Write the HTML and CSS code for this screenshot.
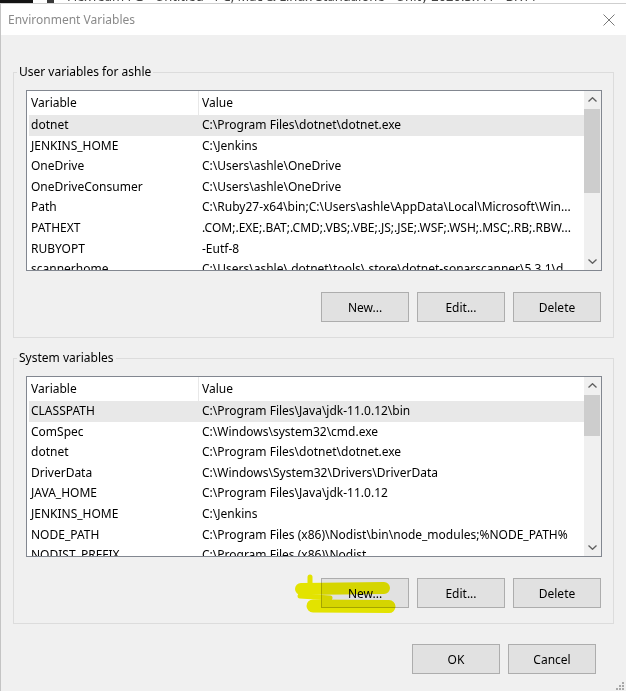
FILE: index.html
```html
<!DOCTYPE html>
<html>
<head>
<meta charset="utf-8">
<title>Environment Variables</title>
<link rel="stylesheet" href="styles.css">
</head>
<body>
<div class="behind">
  <div class="behind-black"></div>
  <div class="behind-icon"></div>
  <span class="behind-text">FlexTeam FG - Untitled - PC, Mac &amp; Linux Standalone - Unity 2020.3.7f1 &lt;DX11&gt;</span>
</div>
<div class="dialog">
  <div class="titlebar">
    <span class="title">Environment Variables</span>
    <svg class="close" width="12" height="12" viewBox="0 0 12 12"><path d="M0.5 0.5 L11.5 11.5 M11.5 0.5 L0.5 11.5" stroke="#7a7a7a" stroke-width="1" fill="none"/></svg>
  </div>
  <div class="content">
    <fieldset class="group">
      <legend>User variables for ashle</legend>
      <div class="group-inner">
        <div class="list">
          <div class="list-main">
            <div class="hdr"><div class="c1">Variable</div><div class="c2">Value</div></div>
            <div class="row sel"><div class="c1">dotnet</div><div class="c2">C:\Program Files\dotnet\dotnet.exe</div></div>
            <div class="row"><div class="c1">JENKINS_HOME</div><div class="c2">C:\Jenkins</div></div>
            <div class="row"><div class="c1">OneDrive</div><div class="c2">C:\Users\ashle\OneDrive</div></div>
            <div class="row"><div class="c1">OneDriveConsumer</div><div class="c2">C:\Users\ashle\OneDrive</div></div>
            <div class="row"><div class="c1">Path</div><div class="c2">C:\Ruby27-x64\bin;C:\Users\ashle\AppData\Local\Microsoft\Win...</div></div>
            <div class="row"><div class="c1">PATHEXT</div><div class="c2">.COM;.EXE;.BAT;.CMD;.VBS;.VBE;.JS;.JSE;.WSF;.WSH;.MSC;.RB;.RBW...</div></div>
            <div class="row"><div class="c1">RUBYOPT</div><div class="c2">-Eutf-8</div></div>
            <div class="row"><div class="c1">scannerhome</div><div class="c2">C:\Users\ashle\.dotnet\tools\.store\dotnet-sonarscanner\5.3.1\d...</div></div>
          </div>
          <div class="vscroll">
            <div class="sb-arrow"><svg width="9" height="5" viewBox="0 0 9 5"><polyline points="0.5,4.5 4.5,0.7 8.5,4.5" fill="none" stroke="#606060" stroke-width="1.3"/></svg></div>
            <div class="sb-track"><div class="thumb thumb-user"></div></div>
            <div class="sb-arrow"><svg width="9" height="5" viewBox="0 0 9 5"><polyline points="0.5,0.5 4.5,4.3 8.5,0.5" fill="none" stroke="#606060" stroke-width="1.3"/></svg></div>
          </div>
        </div>
        <div class="btns">
          <button class="btn">New...</button>
          <button class="btn">Edit...</button>
          <button class="btn">Delete</button>
        </div>
      </div>
    </fieldset>

    <fieldset class="group group-sys">
      <legend>System variables</legend>
      <div class="group-inner">
        <div class="list">
          <div class="list-main">
            <div class="hdr"><div class="c1">Variable</div><div class="c2">Value</div></div>
            <div class="row sel"><div class="c1">CLASSPATH</div><div class="c2">C:\Program Files\Java\jdk-11.0.12\bin</div></div>
            <div class="row"><div class="c1">ComSpec</div><div class="c2">C:\Windows\system32\cmd.exe</div></div>
            <div class="row"><div class="c1">dotnet</div><div class="c2">C:\Program Files\dotnet\dotnet.exe</div></div>
            <div class="row"><div class="c1">DriverData</div><div class="c2">C:\Windows\System32\Drivers\DriverData</div></div>
            <div class="row"><div class="c1">JAVA_HOME</div><div class="c2">C:\Program Files\Java\jdk-11.0.12</div></div>
            <div class="row"><div class="c1">JENKINS_HOME</div><div class="c2">C:\Jenkins</div></div>
            <div class="row"><div class="c1">NODE_PATH</div><div class="c2">C:\Program Files (x86)\Nodist\bin\node_modules;%NODE_PATH%</div></div>
            <div class="row"><div class="c1">NODIST_PREFIX</div><div class="c2">C:\Program Files (x86)\Nodist</div></div>
          </div>
          <div class="vscroll">
            <div class="sb-arrow"><svg width="9" height="5" viewBox="0 0 9 5"><polyline points="0.5,4.5 4.5,0.7 8.5,4.5" fill="none" stroke="#606060" stroke-width="1.3"/></svg></div>
            <div class="sb-track"><div class="thumb thumb-sys"></div></div>
            <div class="sb-arrow"><svg width="9" height="5" viewBox="0 0 9 5"><polyline points="0.5,0.5 4.5,4.3 8.5,0.5" fill="none" stroke="#606060" stroke-width="1.3"/></svg></div>
          </div>
        </div>
        <div class="btns">
          <button class="btn">New...</button>
          <button class="btn">Edit...</button>
          <button class="btn">Delete</button>
        </div>
      </div>
    </fieldset>

    <div class="footer">
      <button class="btn">OK</button>
      <button class="btn">Cancel</button>
    </div>
    <div class="grip-row">
      <svg width="8" height="8" viewBox="0 0 8 8" fill="#a8a8a8">
        <rect x="6" y="0" width="2" height="2"/>
        <rect x="3" y="3" width="2" height="2"/><rect x="6" y="3" width="2" height="2"/>
        <rect x="0" y="6" width="2" height="2"/><rect x="3" y="6" width="2" height="2"/><rect x="6" y="6" width="2" height="2"/>
      </svg>
    </div>
  </div>
</div>
<svg class="highlight" width="626" height="691" viewBox="0 0 626 691">
  <g stroke="#f2f200" fill="none" stroke-linecap="round">
    <path d="M301 589 L384 588" stroke-width="12"/>
    <path d="M313 606 L389 606.5" stroke-width="13"/>
    <path d="M310 577 L310 594" stroke-width="5"/>
    <path d="M300 596 L330 598" stroke-width="5"/>
  </g>
</svg>
</body>
</html>
```
FILE: styles.css
```css
* { box-sizing: border-box; }
html, body { margin: 0; padding: 0; }
body {
  width: 626px;
  height: 691px;
  overflow: hidden;
  position: relative;
  background: #f0f0f0;
  font-family: "Noto Sans", "Segoe UI", sans-serif;
  font-size: 12px;
  color: #000;
}

/* window behind the dialog */
.behind {
  height: 4px;
  overflow: hidden;
  background: #fff;
  display: flex;
  align-items: flex-start;
  border-bottom: 1px solid #cfcfcf;
}
.behind-black { width: 33px; height: 3px; background: #141414; flex: none; }
.behind-icon { width: 7px; height: 3px; background: #3a3a3a; margin-left: 14px; flex: none; }
.behind-text {
  margin-left: 13px;
  margin-top: -11px;
  font-size: 13px;
  line-height: 15px;
  color: #444;
  white-space: nowrap;
}

/* dialog */
.dialog {
  border-left: 1px solid #c4c4c4;
  height: 687px;
}
.titlebar {
  height: 31px;
  background: #fff;
  display: flex;
  align-items: center;
  padding-left: 7px;
}
.title { color: #8a8a8a; font-size: 12px; line-height: 16px; }
.close { margin-left: auto; margin-right: 11px; margin-top: 1px; }

.content { padding: 29px 0 0 12px; }

.group {
  width: 601px;
  margin: 0;
  padding: 10px 0 15px 0;
  border: 1px solid #dcdcdc;
  min-width: 0;
}
.group legend {
  padding: 0 2px;
  margin-left: 3px;
  font-size: 12px;
  line-height: 16px;
}
.group-sys { margin-top: 12px; }
.group-inner { padding: 0 11px 0 12px; }

.list {
  height: 181px;
  border: 1px solid #828790;
  background: #fff;
  display: flex;
}
.list-main {
  flex: 1;
  min-width: 0;
  overflow: hidden;
  padding-left: 2px;
}
.hdr {
  height: 24px;
  display: flex;
  align-items: center;
  line-height: 24px;
}
.c1 {
  width: 169px;
  flex: none;
  padding-left: 2px;
  white-space: nowrap;
  overflow: hidden;
}
.c2 {
  flex: 1;
  min-width: 0;
  padding-left: 4px;
  white-space: nowrap;
  overflow: hidden;
}
.hdr .c2 { border-left: 1px solid #e8e8e8; padding-left: 3px; }
.row {
  height: 20.6px;
  line-height: 20.6px;
  display: flex;
}
.row.sel { background: #e8e8e8; }

.vscroll {
  width: 17px;
  flex: none;
  background: #f0f0f0;
  display: flex;
  flex-direction: column;
}
.sb-arrow {
  height: 17px;
  flex: none;
  display: flex;
  align-items: center;
  justify-content: center;
}
.sb-track { flex: 1; }
.thumb { margin: 1px 1px 0 0; background: #cdcdcd; }
.thumb-user { height: 84px; }
.thumb-sys { height: 41px; }

.btns {
  display: flex;
  justify-content: flex-end;
  gap: 8px;
  margin-top: 21px;
  padding-right: 1px;
}
.btn {
  width: 88px;
  height: 30px;
  padding: 0;
  margin: 0;
  background: #e1e1e1;
  border: 1px solid #adadad;
  font-family: inherit;
  font-size: 12px;
  color: #000;
}

.footer {
  display: flex;
  justify-content: flex-end;
  gap: 8px;
  margin-top: 20px;
  padding-right: 30px;
}
.grip-row {
  display: flex;
  justify-content: flex-end;
  margin-top: 8px;
  padding-right: 2px;
}

.highlight {
  position: absolute;
  left: 0;
  top: 0;
  pointer-events: none;
  mix-blend-mode: multiply;
}
```
